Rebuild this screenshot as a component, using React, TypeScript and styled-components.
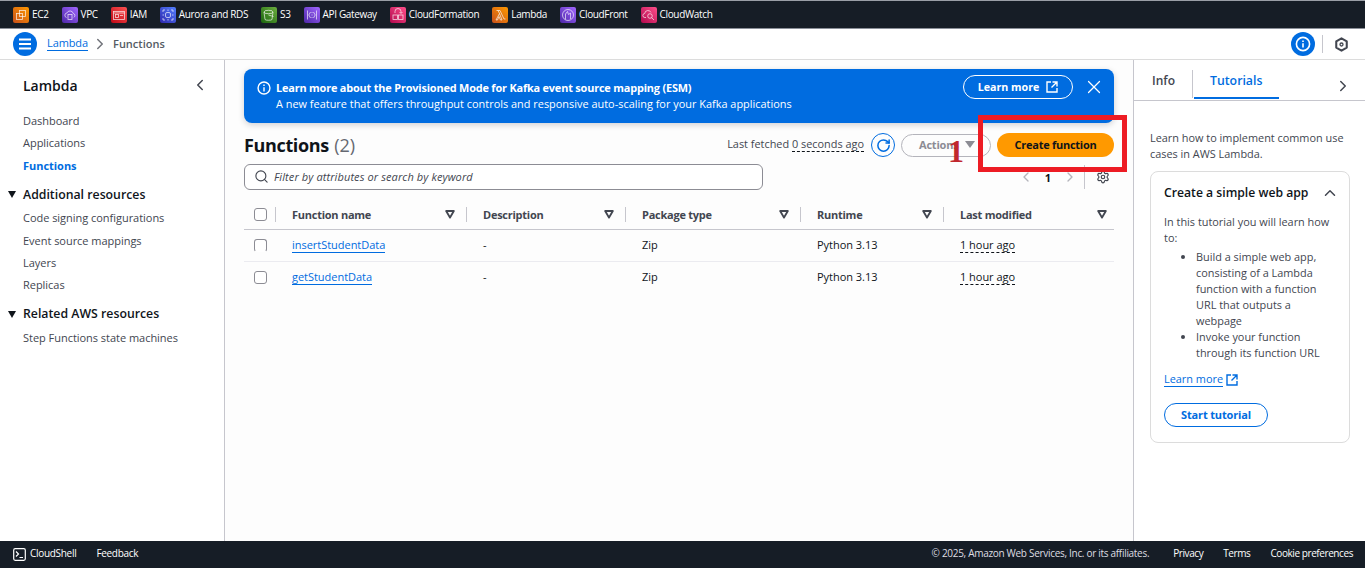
import React from 'react'
import styled, { createGlobalStyle } from 'styled-components'
import { ChevronLeft, ChevronRight, ChevronUp, RotateCw, Search, Settings, X } from 'lucide-react'

const GlobalStyle = createGlobalStyle`
  html, body {
    margin: 0;
    padding: 0;
    background: #fff;
  }
  body {
    font-family: "Open Sans", "Noto Sans", sans-serif;
    font-size: 11.5px;
    color: #0f141a;
  }
  * {
    box-sizing: border-box;
  }
`

const Page = styled.div`
  position: relative;
  width: 1365px;
  height: 568px;
  display: flex;
  flex-direction: column;
  overflow: hidden;
`

const TopNav = styled.nav`
  height: 29px;
  flex: none;
  display: flex;
  align-items: center;
  gap: 13px;
  padding-left: 13px;
  background: #161d26;
  border-top: 1px solid #9a9ea6;
  border-bottom: 1px solid #8a8f98;
`

const Service = styled.a`
  display: flex;
  align-items: center;
  gap: 3px;
  color: #fff;
  font-size: 10px;
  line-height: 16px;
  letter-spacing: -0.35px;
  white-space: nowrap;
`

const ServiceName = styled.span`
  padding-bottom: 2px;
`

const ServiceTile = styled.span<{ $from: string; $to: string }>`
  width: 16px;
  height: 16px;
  flex: none;
  display: block;
  border-radius: 2px;
  background: linear-gradient(45deg, ${p => p.$from}, ${p => p.$to});

  svg {
    display: block;
  }
`

const Crumbs = styled.div`
  height: 31px;
  flex: none;
  display: flex;
  align-items: center;
  padding: 0 16px 0 13px;
  border-bottom: 1px solid #dcdcdc;
  background: #fff;
`

const RoundBlue = styled.span`
  width: 24px;
  height: 24px;
  flex: none;
  display: flex;
  align-items: center;
  justify-content: center;
  border-radius: 50%;
  background: #006ce0;
`

const CrumbLink = styled.a`
  margin: 0 0 2px 10px;
  color: #006ce0;
  font-size: 11px;
  line-height: 15px;
  letter-spacing: -0.1px;
  border-bottom: 1px solid #006ce0;
`

const CrumbSep = styled.span`
  display: flex;
  margin: 0 4px 0 3px;
  color: #72747b;
`

const CrumbCurrent = styled.span`
  margin-bottom: 2px;
  font-size: 11px;
  font-weight: 600;
  color: #545b64;
`

const CrumbTools = styled.div`
  margin-left: auto;
  display: flex;
  align-items: center;
`

const ToolSep = styled.span`
  width: 1px;
  height: 18px;
  margin: 0 11px 0 7px;
  background: #c6c6cd;
`

const Body = styled.div`
  flex: 1;
  min-height: 0;
  display: flex;
`

const Sidebar = styled.aside`
  width: 225px;
  flex: none;
  padding: 15px 0 0 23px;
  border-right: 1px solid #c6c6cd;
  background: #fff;
`

const SideTitle = styled.div`
  display: flex;
  align-items: center;
  justify-content: space-between;
  padding-right: 15px;
  height: 20px;
  font-size: 14px;
  font-weight: 600;
  color: #0f141a;
`

const SideList = styled.div`
  margin-top: 15px;
  display: flex;
  flex-direction: column;
`

const SideLink = styled.a<{ $active?: boolean }>`
  height: 22.4px;
  line-height: 22px;
  font-size: 11px;
  letter-spacing: -0.03px;
  font-weight: ${p => (p.$active ? 700 : 400)};
  color: ${p => (p.$active ? '#006ce0' : '#424650')};
`

const SideSection = styled.div`
  position: relative;
  display: flex;
  align-items: center;
  height: 20px;
  margin-top: 7px;
  margin-bottom: 3px;
  font-size: 12.3px;
  font-weight: 600;
  color: #0f141a;

  &::before {
    content: '';
    position: absolute;
    left: -15px;
    top: 7px;
    border-left: 4.5px solid transparent;
    border-right: 4.5px solid transparent;
    border-top: 7px solid #0f141a;
  }
`

const Main = styled.main`
  flex: 1;
  min-width: 0;
  padding: 9px 19px 0;
  background: #fdfdfd;
`

const Banner = styled.div`
  height: 54px;
  display: flex;
  align-items: center;
  padding: 0 9px 0 13px;
  border-radius: 8px;
  background: #006ce0;
  color: #fff;
  box-shadow: 0 2px 6px rgba(0, 7, 22, 0.18);
`

const BannerIcon = styled.svg`
  flex: none;
  margin-top: -16px;
`

const BannerText = styled.div`
  margin-left: 5px;
  font-size: 10.9px;
  line-height: 16px;
`

const BannerTitle = styled.div`
  font-weight: 700;
  letter-spacing: -0.17px;
`

const BannerSub = styled.div`
  letter-spacing: 0.015px;
`

const BannerLearn = styled.a`
  margin: -18px 0 0 auto;
  width: 110px;
  height: 24px;
  display: flex;
  align-items: center;
  justify-content: center;
  gap: 7px;
  border: 1px solid #fff;
  border-radius: 12px;
  font-size: 10.7px;
  font-weight: 700;
`

const BannerClose = styled.span`
  display: flex;
  margin: -18px 0 0 10px;
`

const HeadRow = styled.div`
  height: 24px;
  margin-top: 10px;
  display: flex;
  align-items: center;
`

const Title = styled.h1`
  margin: 0;
  font-size: 18px;
  font-weight: 700;
  letter-spacing: -0.35px;
  color: #0f141a;
`

const Count = styled.span`
  margin-left: 1px;
  font-weight: 400;
  letter-spacing: 0;
  color: #656871;
`

const Fetched = styled.span`
  margin: -3px 0 0 auto;
  font-size: 10.9px;
  color: #424650;
`

const Dashed = styled.span`
  border-bottom: 1px dashed #0f141a;
`

const RefreshButton = styled.span`
  width: 24px;
  height: 24px;
  margin-left: 7px;
  display: flex;
  align-items: center;
  justify-content: center;
  border: 1.6px solid #006ce0;
  border-radius: 50%;
  color: #006ce0;
`

const ActionsButton = styled.span`
  width: 90px;
  height: 23px;
  margin-left: 6px;
  display: flex;
  align-items: center;
  gap: 6px;
  padding: 0 0 1px 17px;
  border: 1px solid #b4b4bb;
  border-radius: 12px;
  font-size: 11px;
  font-weight: 700;
  letter-spacing: -0.2px;
  color: #8c8c94;
`

const Caret = styled.span`
  width: 0;
  height: 0;
  border-left: 5px solid transparent;
  border-right: 5px solid transparent;
  border-top: 7px solid #8c8c94;
`

const CreateButton = styled.span`
  width: 117px;
  height: 24px;
  margin-left: 6px;
  padding-bottom: 1px;
  display: flex;
  align-items: center;
  justify-content: center;
  border-radius: 12px;
  background: #ff9900;
  font-size: 11px;
  font-weight: 700;
  letter-spacing: -0.27px;
  color: #0f141a;
`

const FilterRow = styled.div`
  margin-top: 7px;
  display: flex;
  align-items: center;
`

const SearchBox = styled.div`
  width: 519px;
  height: 26px;
  display: flex;
  align-items: center;
  gap: 5px;
  padding: 0 0 1px 9px;
  border: 1px solid #8c8c94;
  border-radius: 6px;
  background: #fff;
  color: #424650;
  font-size: 11px;
  letter-spacing: 0.1px;
  font-style: italic;
`

const Pager = styled.div`
  margin-left: auto;
  padding-right: 4px;
  display: flex;
  align-items: center;
  height: 24px;
  color: #b4b4bb;
`

const PageNumber = styled.span`
  width: 28px;
  text-align: center;
  font-size: 11px;
  font-weight: 700;
  color: #0f141a;
`

const PagerSep = styled.span`
  width: 1px;
  height: 24px;
  margin: 0 11px 0 6px;
  background: #c6c6cd;
`

const Table = styled.div`
  margin-top: 10px;
  display: grid;
  grid-template-columns: 32px 191px 159px 175px 143px 170px;
`

const HeadCell = styled.div`
  height: 30px;
  display: flex;
  align-items: center;
  border-bottom: 1px solid #c6c6cd;
`

const HeadInner = styled.div<{ $last?: boolean }>`
  flex: 1;
  height: 15px;
  display: flex;
  align-items: center;
  justify-content: space-between;
  padding: 0 ${p => (p.$last ? 7 : 11)}px 0 16px;
  border-right: ${p => (p.$last ? 'none' : '1px solid #c6c6cd')};
  font-size: 11px;
  font-weight: 700;
  letter-spacing: -0.25px;
  color: #424650;
`

const CheckCell = styled(HeadInner)`
  padding: 0 0 0 10px;
`

const Box = styled.span<{ $clipped?: boolean }>`
  width: 13px;
  height: 13px;
  display: block;
  border: 1px solid #8c8c94;
  border-bottom-color: ${p => (p.$clipped ? 'transparent' : '#8c8c94')};
  border-radius: 3px;
  background: #fff;
`

const Cell = styled.div<{ $last?: boolean; $box?: boolean }>`
  height: ${p => (p.$last ? 31 : 32)}px;
  display: flex;
  align-items: center;
  padding-left: ${p => (p.$box ? 10 : 16)}px;
  padding-bottom: ${p => (p.$box ? 0 : 2)}px;
  border-bottom: ${p => (p.$last ? 'none' : '1px solid #ebebf0')};
  font-size: 11px;
  letter-spacing: -0.03px;
  color: #0f141a;
`

const FunctionLink = styled.a`
  margin-top: 2px;
  color: #006ce0;
  border-bottom: 1px solid #006ce0;
  line-height: 14px;
`

const Panel = styled.aside`
  width: 232px;
  flex: none;
  border-left: 1px solid #c6c6cd;
  background: #fff;
`

const Tabs = styled.div`
  height: 41px;
  display: flex;
  align-items: flex-start;
  border-bottom: 1px solid #c6c6cd;
`

const InfoTab = styled.span`
  width: 59px;
  height: 28px;
  margin-top: 10px;
  border-right: 1px solid #c6c6cd;
  padding: 1px 0 0 18px;
  font-size: 12px;
  line-height: 20px;
  font-weight: 600;
  color: #424650;
`

const ActiveTab = styled.span`
  width: 85px;
  height: 39px;
  margin-left: 1px;
  padding: 11px 0 0 16px;
  border-bottom: 2px solid #006ce0;
  font-size: 12.3px;
  line-height: 20px;
  font-weight: 600;
  color: #006ce0;
`

const PanelChevron = styled.span`
  margin: 17px 0 0 auto;
  padding-right: 13px;
  display: flex;
  color: #424650;
`

const PanelBody = styled.div`
  padding: 29px 15px 0 16px;
  font-size: 10.9px;
  line-height: 16px;
  color: #424650;
`

const Card = styled.div`
  width: 200px;
  height: 272px;
  margin-top: 9px;
  padding: 12px 10px 0 13px;
  border: 1px solid #dcdcdc;
  border-radius: 8px;
`

const CardHead = styled.div`
  display: flex;
  align-items: center;
  justify-content: space-between;
  height: 18px;
  font-size: 12.2px;
  font-weight: 600;
  color: #0f141a;
`

const CardText = styled.p`
  margin: 12px 0 0;
`

const Bullets = styled.ul`
  margin: 3px 0 0;
  padding-left: 32px;
`

const CardLink = styled.div`
  margin-top: 11px;
  display: flex;
  align-items: center;
  gap: 3px;
  color: #006ce0;
`

const CardLinkText = styled.a`
  border-bottom: 1px solid #006ce0;
  line-height: 14px;
`

const TutorialButton = styled.span`
  width: 104px;
  height: 24px;
  margin-top: 16px;
  padding-bottom: 1px;
  display: flex;
  align-items: center;
  justify-content: center;
  border: 1px solid #006ce0;
  border-radius: 12px;
  font-size: 11px;
  font-weight: 700;
  letter-spacing: -0.15px;
  color: #006ce0;
`

const Footer = styled.footer`
  height: 27px;
  flex: none;
  display: flex;
  align-items: center;
  padding: 0 12px 4px 13px;
  background: #161d26;
  color: #fff;
  font-size: 10px;
  letter-spacing: -0.3px;
`

const ShellLink = styled.span`
  display: flex;
  align-items: center;
  gap: 4px;
  margin-right: 20px;
`

const ShellIcon = styled.svg`
  margin-top: 3px;
`

const Copyright = styled.span`
  margin-left: auto;
  margin-right: 4px;
  color: #dedee3;
`

const FootLink = styled.span`
  margin-left: 20px;
  letter-spacing: -0.42px;
`

const Highlight = styled.div`
  position: absolute;
  left: 978px;
  top: 115px;
  width: 149px;
  height: 57px;
  border: 5px solid #ed1c24;
`

const StepNumber = styled.div`
  position: absolute;
  left: 948px;
  top: 135px;
  font-family: "Liberation Serif", serif;
  font-size: 32px;
  line-height: 32px;
  font-weight: 700;
  color: #c1272d;
`

const services = [
  { name: 'EC2', from: '#c8511b', to: '#ff9900', icon: <><rect x="3.5" y="6.5" width="6" height="6" /><rect x="6.5" y="3.5" width="6" height="6" /></> },
  { name: 'VPC', from: '#4d27a8', to: '#a166ff', icon: <><path d="M4.5 10.5a2.3 2.3 0 0 1 .4-4.5 3.4 3.4 0 0 1 6.4.5 2 2 0 0 1 .4 3.8" /><rect x="6" y="7.5" width="4" height="5" /></> },
  { name: 'IAM', from: '#bd0816', to: '#ff5252', icon: <><rect x="2.5" y="4.5" width="11" height="8" /><rect x="4.5" y="7.5" width="3" height="3" /><path d="M9 8.5h3M2.5 6h11" /></> },
  { name: 'Aurora and RDS', from: '#2e27ad', to: '#527fff', icon: <><rect x="5.5" y="5.5" width="5" height="5" rx="1.5" /><path d="M3 3h2M3 3v2M13 3h-2M13 3v2M3 13h2M3 13v-2M13 13h-2M13 13v-2M8 2.5v1.5M8 12v1.5M2.5 8H4M12 8h1.5" /></> },
  { name: 'S3', from: '#1b660f', to: '#6cae3e', icon: <><ellipse cx="7.5" cy="5" rx="4.5" ry="1.7" /><path d="M3 5l1 7.5c.4 1 6.6 1 7 0l1-7.5M7.5 8l5 1.5" /></> },
  { name: 'API Gateway', from: '#4d27a8', to: '#a166ff', icon: <path d="M3.5 3.5v9M12.5 3.5v9M6.5 5L4.8 8l1.7 3M9.5 5l1.7 3-1.7 3M8 5v1M8 7.5v1M8 10v1" /> },
  { name: 'CloudFormation', from: '#b0084d', to: '#ff4f8b', icon: <><rect x="3" y="8" width="4.5" height="4.5" /><rect x="8.5" y="8" width="4.5" height="4.5" /><path d="M5 6V4.5a3 3 0 0 1 6 0V6M9.5 5l1.5 1.5L12.5 5" /></> },
  { name: 'Lambda', from: '#c8511b', to: '#ff9900', icon: <path d="M4 13l3.5-6.5L6 3.5H4.5M6 3.5h2l4 8.5h1.5M7.5 6.5L10 13H8.5L7 9.5 5.5 13H4" /> },
  { name: 'CloudFront', from: '#4d27a8', to: '#a166ff', icon: <><circle cx="8" cy="8" r="5.5" /><path d="M5.5 12.5V7l2-2.5 1 3 2-1.5v6" /></> },
  { name: 'CloudWatch', from: '#b0084d', to: '#ff4f8b', icon: <><path d="M5 10.5H4a2 2 0 0 1-.3-4 3.3 3.3 0 0 1 6.3-1" /><circle cx="9" cy="9" r="2.3" /><path d="M10.7 10.7L13 13" /></> },
]

const rows = ['insertStudentData', 'getStudentData']

const FilterIcon = () => (
  <svg width="10" height="9" viewBox="0 0 10 9" fill="none" stroke="#424650" strokeWidth="1.9">
    <path d="M1.2 1h7.6L5 7.6z" strokeLinejoin="round" />
  </svg>
)

const ExternalIcon = ({ color, size }: { color: string; size: number }) => (
  <svg width={size} height={size} viewBox="0 0 12 12" fill="none" stroke={color} strokeWidth="1.4">
    <path d="M5 1H1v10h10V7M6.5 1H11v4.5M11 1L5.5 6.5" />
  </svg>
)

const columns = ['Function name', 'Description', 'Package type', 'Runtime', 'Last modified']

export default function App() {
  return (
    <Page>
      <GlobalStyle />
      <TopNav>
        {services.map(s => (
          <Service key={s.name}>
            <ServiceTile $from={s.from} $to={s.to}>
              <svg width="16" height="16" viewBox="0 0 16 16" fill="none" stroke="#fff" strokeOpacity="0.8" strokeWidth="0.8">
                {s.icon}
              </svg>
            </ServiceTile>
            <ServiceName>{s.name}</ServiceName>
          </Service>
        ))}
      </TopNav>
      <Crumbs>
        <RoundBlue>
          <svg width="14" height="12" viewBox="0 0 14 12" stroke="#fff" strokeWidth="2">
            <path d="M1 1.5h12M1 6h12M1 10.5h12" />
          </svg>
        </RoundBlue>
        <CrumbLink>Lambda</CrumbLink>
        <CrumbSep>
          <ChevronRight size={18} strokeWidth={2} />
        </CrumbSep>
        <CrumbCurrent>Functions</CrumbCurrent>
        <CrumbTools>
          <RoundBlue>
            <svg width="16" height="16" viewBox="0 0 16 16" fill="none" stroke="#fff" strokeWidth="1.6">
              <circle cx="8" cy="8" r="6.6" />
              <path d="M8 4.4v1.6M8 7.2v4.4" />
            </svg>
          </RoundBlue>
          <ToolSep />
          <svg width="15" height="15" viewBox="0 0 16 16" fill="none" stroke="#424650" strokeWidth="2.2">
            <path d="M8 1.5l5.6 3.2v6.6L8 14.5l-5.6-3.2V4.7z" strokeLinejoin="round" />
            <circle cx="8" cy="8" r="1.6" strokeWidth="1.4" />
          </svg>
        </CrumbTools>
      </Crumbs>
      <Body>
        <Sidebar>
          <SideTitle>
            Lambda
            <ChevronLeft size={18} color="#424650" />
          </SideTitle>
          <SideList>
            <SideLink>Dashboard</SideLink>
            <SideLink>Applications</SideLink>
            <SideLink $active>Functions</SideLink>
            <SideSection>Additional resources</SideSection>
            <SideLink>Code signing configurations</SideLink>
            <SideLink>Event source mappings</SideLink>
            <SideLink>Layers</SideLink>
            <SideLink>Replicas</SideLink>
            <SideSection>Related AWS resources</SideSection>
            <SideLink>Step Functions state machines</SideLink>
          </SideList>
        </Sidebar>
        <Main>
          <Banner>
            <BannerIcon width="14" height="14" viewBox="0 0 16 16" fill="none" stroke="#fff" strokeWidth="1.6">
              <circle cx="8" cy="8" r="6.8" />
              <path d="M8 4v1.8M8 7v5" />
            </BannerIcon>
            <BannerText>
              <BannerTitle>Learn more about the Provisioned Mode for Kafka event source mapping (ESM)</BannerTitle>
              <BannerSub>A new feature that offers throughput controls and responsive auto-scaling for your Kafka applications</BannerSub>
            </BannerText>
            <BannerLearn>
              Learn more
              <ExternalIcon color="#fff" size={12} />
            </BannerLearn>
            <BannerClose>
              <X size={22} strokeWidth={1.3} />
            </BannerClose>
          </Banner>
          <HeadRow>
            <Title>
              Functions <Count>(2)</Count>
            </Title>
            <Fetched>
              Last fetched <Dashed>0 seconds ago</Dashed>
            </Fetched>
            <RefreshButton>
              <RotateCw size={15} strokeWidth={2.4} />
            </RefreshButton>
            <ActionsButton>
              Actions
              <Caret />
            </ActionsButton>
            <CreateButton>Create function</CreateButton>
          </HeadRow>
          <FilterRow>
            <SearchBox>
              <Search size={15} strokeWidth={1.8} />
              Filter by attributes or search by keyword
            </SearchBox>
            <Pager>
              <ChevronLeft size={16} />
              <PageNumber>1</PageNumber>
              <ChevronRight size={16} />
              <PagerSep />
              <Settings size={14} color="#424650" strokeWidth={2} />
            </Pager>
          </FilterRow>
          <Table>
            <HeadCell>
              <CheckCell>
                <Box />
              </CheckCell>
            </HeadCell>
            {columns.map((c, i) => (
              <HeadCell key={c}>
                <HeadInner $last={i === columns.length - 1}>
                  {c}
                  <FilterIcon />
                </HeadInner>
              </HeadCell>
            ))}
            {rows.map((name, i) => {
              const last = i === rows.length - 1
              return (
                <React.Fragment key={name}>
                  <Cell $box $last={last}>
                    <Box $clipped={i === 0} />
                  </Cell>
                  <Cell $last={last}>
                    <FunctionLink>{name}</FunctionLink>
                  </Cell>
                  <Cell $last={last}>-</Cell>
                  <Cell $last={last}>Zip</Cell>
                  <Cell $last={last}>Python 3.13</Cell>
                  <Cell $last={last}>
                    <Dashed>1 hour ago</Dashed>
                  </Cell>
                </React.Fragment>
              )
            })}
          </Table>
        </Main>
        <Panel>
          <Tabs>
            <InfoTab>Info</InfoTab>
            <ActiveTab>Tutorials</ActiveTab>
            <PanelChevron>
              <ChevronRight size={18} />
            </PanelChevron>
          </Tabs>
          <PanelBody>
            Learn how to implement common use cases in AWS Lambda.
            <Card>
              <CardHead>
                Create a simple web app
                <ChevronUp size={18} color="#424650" />
              </CardHead>
              <CardText>In this tutorial you will learn how to:</CardText>
              <Bullets>
                <li>Build a simple web app, consisting of a Lambda function with a function URL that outputs a webpage</li>
                <li>Invoke your function through its function URL</li>
              </Bullets>
              <CardLink>
                <CardLinkText>Learn more</CardLinkText>
                <ExternalIcon color="#006ce0" size={12} />
              </CardLink>
              <TutorialButton>Start tutorial</TutorialButton>
            </Card>
          </PanelBody>
        </Panel>
      </Body>
      <Footer>
        <ShellLink>
          <ShellIcon width="13" height="13" viewBox="0 0 13 13" fill="none" stroke="#fff" strokeWidth="1.2">
            <rect x="0.7" y="0.7" width="11.6" height="11.6" rx="1.5" />
            <path d="M3 3.5l2.5 2.5L3 8.5M6.5 9.5H10" />
          </ShellIcon>
          CloudShell
        </ShellLink>
        <span>Feedback</span>
        <Copyright>© 2025, Amazon Web Services, Inc. or its affiliates.</Copyright>
        <FootLink>Privacy</FootLink>
        <FootLink>Terms</FootLink>
        <FootLink>Cookie preferences</FootLink>
      </Footer>
      <Highlight />
      <StepNumber>1</StepNumber>
    </Page>
  )
}
